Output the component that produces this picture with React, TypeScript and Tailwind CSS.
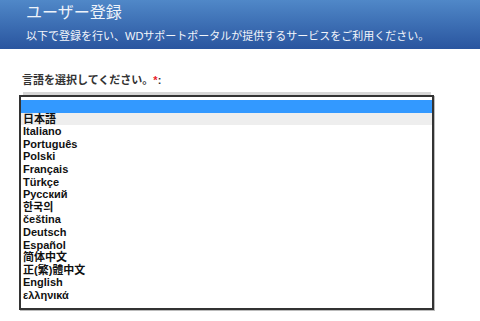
const languages = [
  "",
  "日本語",
  "Italiano",
  "Português",
  "Polski",
  "Français",
  "Türkçe",
  "Русский",
  "한국의",
  "čeština",
  "Deutsch",
  "Español",
  "简体中文",
  "正(繁)體中文",
  "English",
  "ελληνικά",
];

export default function App() {
  return (
    <div className="w-[480px] h-[321px] bg-white overflow-hidden font-['Liberation_Sans','Noto_Sans_CJK_JP',sans-serif]">
      <header className="h-[49px] bg-gradient-to-b from-[#5088c8] to-[#2a559f] pl-[26px] pt-[3px] text-white">
        <h1 className="text-[16px] leading-[20px] font-normal text-[#eef3fa]">ユーザー登録</h1>
        <p className="text-[11px] leading-[14px] mt-[6px] text-[#f2f5fb]">
          以下で登録を行い、WDサポートポータルが提供するサービスをご利用ください。
        </p>
      </header>

      <div className="pl-[19px] pt-[24px]">
        <label className="block pl-[3px] text-[11px] leading-[14px] font-bold text-[#333]">
          言語を選択してください。<span className="text-[#e8202a]">*</span>:
        </label>

        <div className="mt-[5px] ml-[4px] w-[408px] h-[3px] bg-[#d6d6d6]" />
        <div className="w-[415px] h-[215px] border-2 border-[#333] shadow-[1px_1px_0_#bbb] pt-[3px] bg-white">
          <ul className="text-[11px] font-bold text-[#111]">
            {languages.map((lang, i) => (
              <li
                key={i}
                className={
                  "h-[12.6px] leading-[12.6px] pl-[2px] whitespace-nowrap " +
                  (i === 0 ? "bg-[#3399ff]" : i === 1 ? "bg-[#eeeeee]" : "")
                }
              >
                {lang}
              </li>
            ))}
          </ul>
        </div>
      </div>
    </div>
  );
}
